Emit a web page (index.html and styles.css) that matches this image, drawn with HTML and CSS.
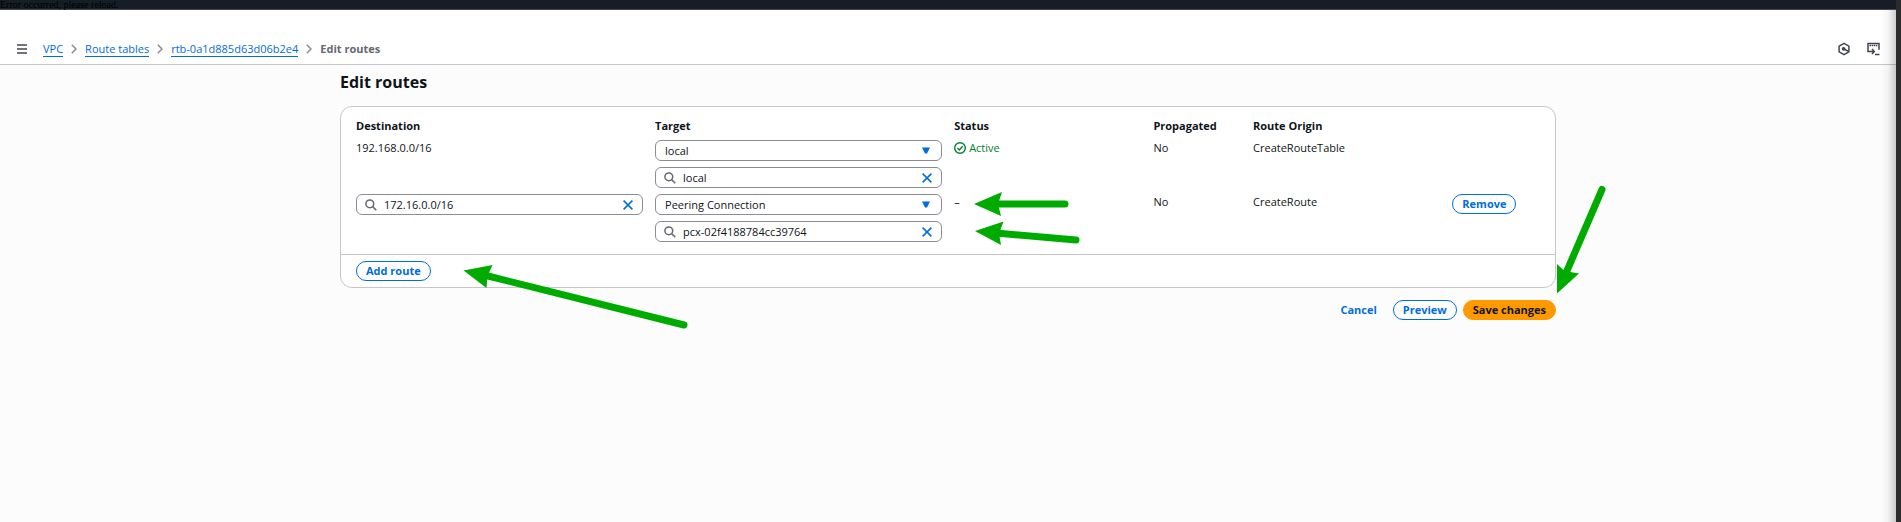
FILE: index.html
```html
<!DOCTYPE html>
<html lang="en">
<head>
<meta charset="utf-8">
<title>Edit routes | VPC</title>
<link rel="stylesheet" href="styles.css">
</head>
<body>
<div class="page">
  <div class="notice">Error occurred, please reload.</div>
  <header class="topnav">
    <button class="icon-button menu" aria-label="Open navigation">
      <svg width="12" height="12" viewBox="0 0 12 12"><path d="M1 2h10M1 6h10M1 10h10" stroke="#424650" stroke-width="1.6"/></svg>
    </button>
    <nav aria-label="Breadcrumbs">
      <ol class="crumbs">
        <li><a href="#vpc">VPC</a><svg class="chevron" width="6" height="10" viewBox="0 0 6 10"><path d="M.8.8 5 5 .8 9.200"/></svg></li>
        <li><a href="#tables">Route tables</a><svg class="chevron" width="6" height="10" viewBox="0 0 6 10"><path d="M.8.8 5 5 .8 9.200"/></svg></li>
        <li><a href="#rtb">rtb-0a1d885d63d06b2e4</a><svg class="chevron" width="6" height="10" viewBox="0 0 6 10"><path d="M.8.8 5 5 .8 9.200"/></svg></li>
        <li aria-current="page">Edit routes</li>
      </ol>
    </nav>
    <div class="tools">
      <button class="icon-button" aria-label="Diagnose">
        <svg width="12" height="14" viewBox="0 0 12 14" fill="none" stroke="#424650" stroke-width="1.500"><path d="M6 1.400 10.900 4.200v5.600L6 12.600 1.100 9.800V4.200z"/><circle cx="5.600" cy="6.800" r="1.100" fill="#424650"/><path d="m6 7 4.500 2.300"/></svg>
      </button>
      <button class="icon-button" aria-label="CloudShell">
        <svg width="13" height="14" viewBox="0 0 13 14" fill="none" stroke="#424650" stroke-width="1.500"><path d="M3 9.500H1V1.500h11v6.300"/><path d="M2.500 3.600h8" stroke-dasharray="1.500 .6"/><path d="M3 9.500h4M5 7l2.300 2.500L5 12M8 12.500h4.500"/></svg>
      </button>
    </div>
  </header>
  <main class="main">
    <div class="content">
      <h1>Edit routes</h1>
      <section class="card">
        <table class="routes">
          <colgroup><col class="c-wide"><col class="c-wide"><col class="c-mid"><col class="c-small"><col class="c-mid"><col class="c-small"></colgroup>
          <thead>
            <tr><th>Destination</th><th>Target</th><th>Status</th><th>Propagated</th><th>Route Origin</th><td></td></tr>
          </thead>
          <tbody>
            <tr>
              <td>192.168.0.0/16</td>
              <td>
                <div class="stack">
                  <div class="field">
                    <select aria-label="Target type"><option>local</option></select>
                    <svg class="caret" width="8" height="7" viewBox="0 0 8 7"><path d="M0 .5h8L5 6.500H3z"/></svg>
                  </div>
                  <div class="field search">
                    <svg class="lens" width="12" height="12" viewBox="0 0 12 12"><circle cx="4.800" cy="4.800" r="3.900"/><path d="m7.600 7.600 3.700 3.700"/></svg>
                    <input type="text" aria-label="Target" value="local">
                    <button class="clear" aria-label="Clear target"><svg width="10" height="10" viewBox="0 0 10 10"><path d="m.6.6 8.800 8.800M9.400.6.6 9.400"/></svg></button>
                  </div>
                </div>
              </td>
              <td><span class="active"><svg width="12" height="12" viewBox="0 0 12 12"><circle cx="6" cy="6" r="5.300"/><path d="m3.500 6 1.900 1.900 3.200-3.700"/></svg>Active</span></td>
              <td>No</td>
              <td>CreateRouteTable</td>
              <td></td>
            </tr>
            <tr>
              <td>
                <div class="field search">
                  <svg class="lens" width="12" height="12" viewBox="0 0 12 12"><circle cx="4.800" cy="4.800" r="3.900"/><path d="m7.600 7.600 3.700 3.700"/></svg>
                  <input type="text" aria-label="Destination" value="172.16.0.0/16">
                  <button class="clear" aria-label="Clear destination"><svg width="10" height="10" viewBox="0 0 10 10"><path d="m.6.6 8.800 8.800M9.400.6.6 9.400"/></svg></button>
                </div>
              </td>
              <td>
                <div class="stack">
                  <div class="field">
                    <select aria-label="Target type"><option>Peering Connection</option></select>
                    <svg class="caret" width="8" height="7" viewBox="0 0 8 7"><path d="M0 .5h8L5 6.500H3z"/></svg>
                  </div>
                  <div class="field search">
                    <svg class="lens" width="12" height="12" viewBox="0 0 12 12"><circle cx="4.800" cy="4.800" r="3.900"/><path d="m7.600 7.600 3.700 3.700"/></svg>
                    <input type="text" aria-label="Target" value="pcx-02f4188784cc39764">
                    <button class="clear" aria-label="Clear target"><svg width="10" height="10" viewBox="0 0 10 10"><path d="m.6.6 8.800 8.800M9.400.6.6 9.400"/></svg></button>
                  </div>
                </div>
              </td>
              <td>–</td>
              <td>No</td>
              <td>CreateRoute</td>
              <td><button class="btn">Remove</button></td>
            </tr>
          </tbody>
        </table>
        <div class="card-footer"><button class="btn">Add route</button></div>
      </section>
      <div class="actions">
        <button class="btn link">Cancel</button>
        <button class="btn">Preview</button>
        <button class="btn primary">Save changes</button>
      </div>
      <svg class="arrows" width="1270" height="260" viewBox="340 65 1270 260" aria-hidden="true">
        <path class="shaft" d="M1065 204H996M1076 240 996 233M684 325 484 275M1602 189.500 1566 273"/>
        <path d="m974 204 28-12-4 12 3 12zM975 231l28.500-9.500-4.500 12 2 11.500zM463.500 270.500l29-5.500-5 11-1 12zM1557 293.500V264l7.500 7 14.500 2.500z"/>
      </svg>
    </div>
  </main>
</div>
</body>
</html>
```
FILE: styles.css
```css
* { box-sizing: border-box; }

body {
  margin: 0;
  background: #2b2b2b;
  color: #0f141a;
  font: 11px/16px "Open Sans", "Noto Sans", sans-serif;
}

button, input, select { font: inherit; color: inherit; margin: 0; }

.page {
  position: relative;
  display: flex;
  flex-direction: column;
  min-height: 100vh;
  margin-right: 5px;
  background: #fcfcfd;
  overflow: hidden;
}

.page::after {
  content: "";
  position: absolute;
  inset: 10px 0 0 auto;
  width: 16px;
  background: linear-gradient(to right, rgba(0, 0, 0, 0), rgba(0, 0, 0, .04) 50%, rgba(0, 0, 0, .2));
  pointer-events: none;
}

.notice {
  height: 10px;
  background: #161d26;
  border-bottom: 1px solid #424650;
  color: #000;
  font: 10px/9px "Liberation Serif", serif;
}

.topnav {
  display: flex;
  align-items: center;
  height: 55px;
  padding: 24px 16px 0;
  background: #fff;
  border-bottom: 1px solid #c6c6cd;
}

.icon-button {
  display: flex;
  padding: 0;
  border: 0;
  background: none;
}

.menu { margin-right: 15px; }

.crumbs {
  display: flex;
  margin: 0;
  padding: 0;
  list-style: none;
}

.crumbs li { display: flex; align-items: center; }
.crumbs li[aria-current] { color: #656871; font-weight: 700; }

.crumbs a {
  color: #006ce0;
  text-decoration: none;
  line-height: 14px;
  border-bottom: 1px solid #006ce0;
}

.chevron { margin: 0 8px; fill: none; stroke: #8c8c94; stroke-width: 1.5; }

.tools { display: flex; gap: 17px; margin-left: auto; }

.main { flex: 1; padding: 5px 0 24px; }

.content {
  position: relative;
  max-width: 1216px;
  margin: 0 auto;
}

h1 { margin: 0 0 12px; font-size: 16px; font-weight: 700; line-height: 24px; }

.card {
  background: #fff;
  border: 1px solid #c6c6cd;
  border-radius: 12px;
}

.routes {
  width: calc(100% - 18px);
  margin: 11px 0 6px 15px;
  border-collapse: collapse;
  table-layout: fixed;
}

.c-wide { width: 25%; }
.c-mid { width: 16.66%; }
.c-small { width: 8.33%; }

th, .routes td { padding: 0 12px 6px 0; text-align: left; vertical-align: top; }
th { font-weight: 700; }

.stack { display: grid; gap: 6px; }

.field { position: relative; }

.field input, .field select {
  display: block;
  width: 100%;
  height: 21px;
  padding: 0 9px;
  appearance: none;
  background: #fff;
  border: 1px solid #8c8c94;
  border-radius: 6px;
}

.field.search input { padding: 0 28px 0 27px; }

.lens, .caret, .clear { position: absolute; top: 0; bottom: 0; margin: auto 0; }
.lens { left: 9px; fill: none; stroke: #656871; stroke-width: 1.5; }
.caret { right: 12px; fill: #006ce0; pointer-events: none; }
.clear { right: 10px; height: 10px; display: flex; padding: 0; border: 0; background: none; }
.clear svg { fill: none; stroke: #006ce0; stroke-width: 1.5; }

.active { display: flex; align-items: center; gap: 3px; color: #00802f; }
.active svg { fill: none; stroke: #00802f; stroke-width: 1.4; }

.btn {
  height: 20px;
  padding: 0 9px;
  border: 1px solid #006ce0;
  border-radius: 10px;
  background: #fff;
  color: #006ce0;
  font-weight: 700;
  line-height: 16px;
}

.btn.link { border-color: transparent; background: none; }
.btn.primary { border-color: #ff9900; background: #ff9900; color: #0f141a; }

.card-footer { display: flex; padding: 6px 15px; border-top: 1px solid #c6c6cd; }

.actions { display: flex; justify-content: flex-end; gap: 6px; margin-top: 12px; }

.arrows {
  position: absolute;
  top: -5px;
  left: 0;
  overflow: visible;
  fill: #00ab00;
  pointer-events: none;
}

.shaft { fill: none; stroke: #00ab00; stroke-width: 7; stroke-linecap: round; }
```
